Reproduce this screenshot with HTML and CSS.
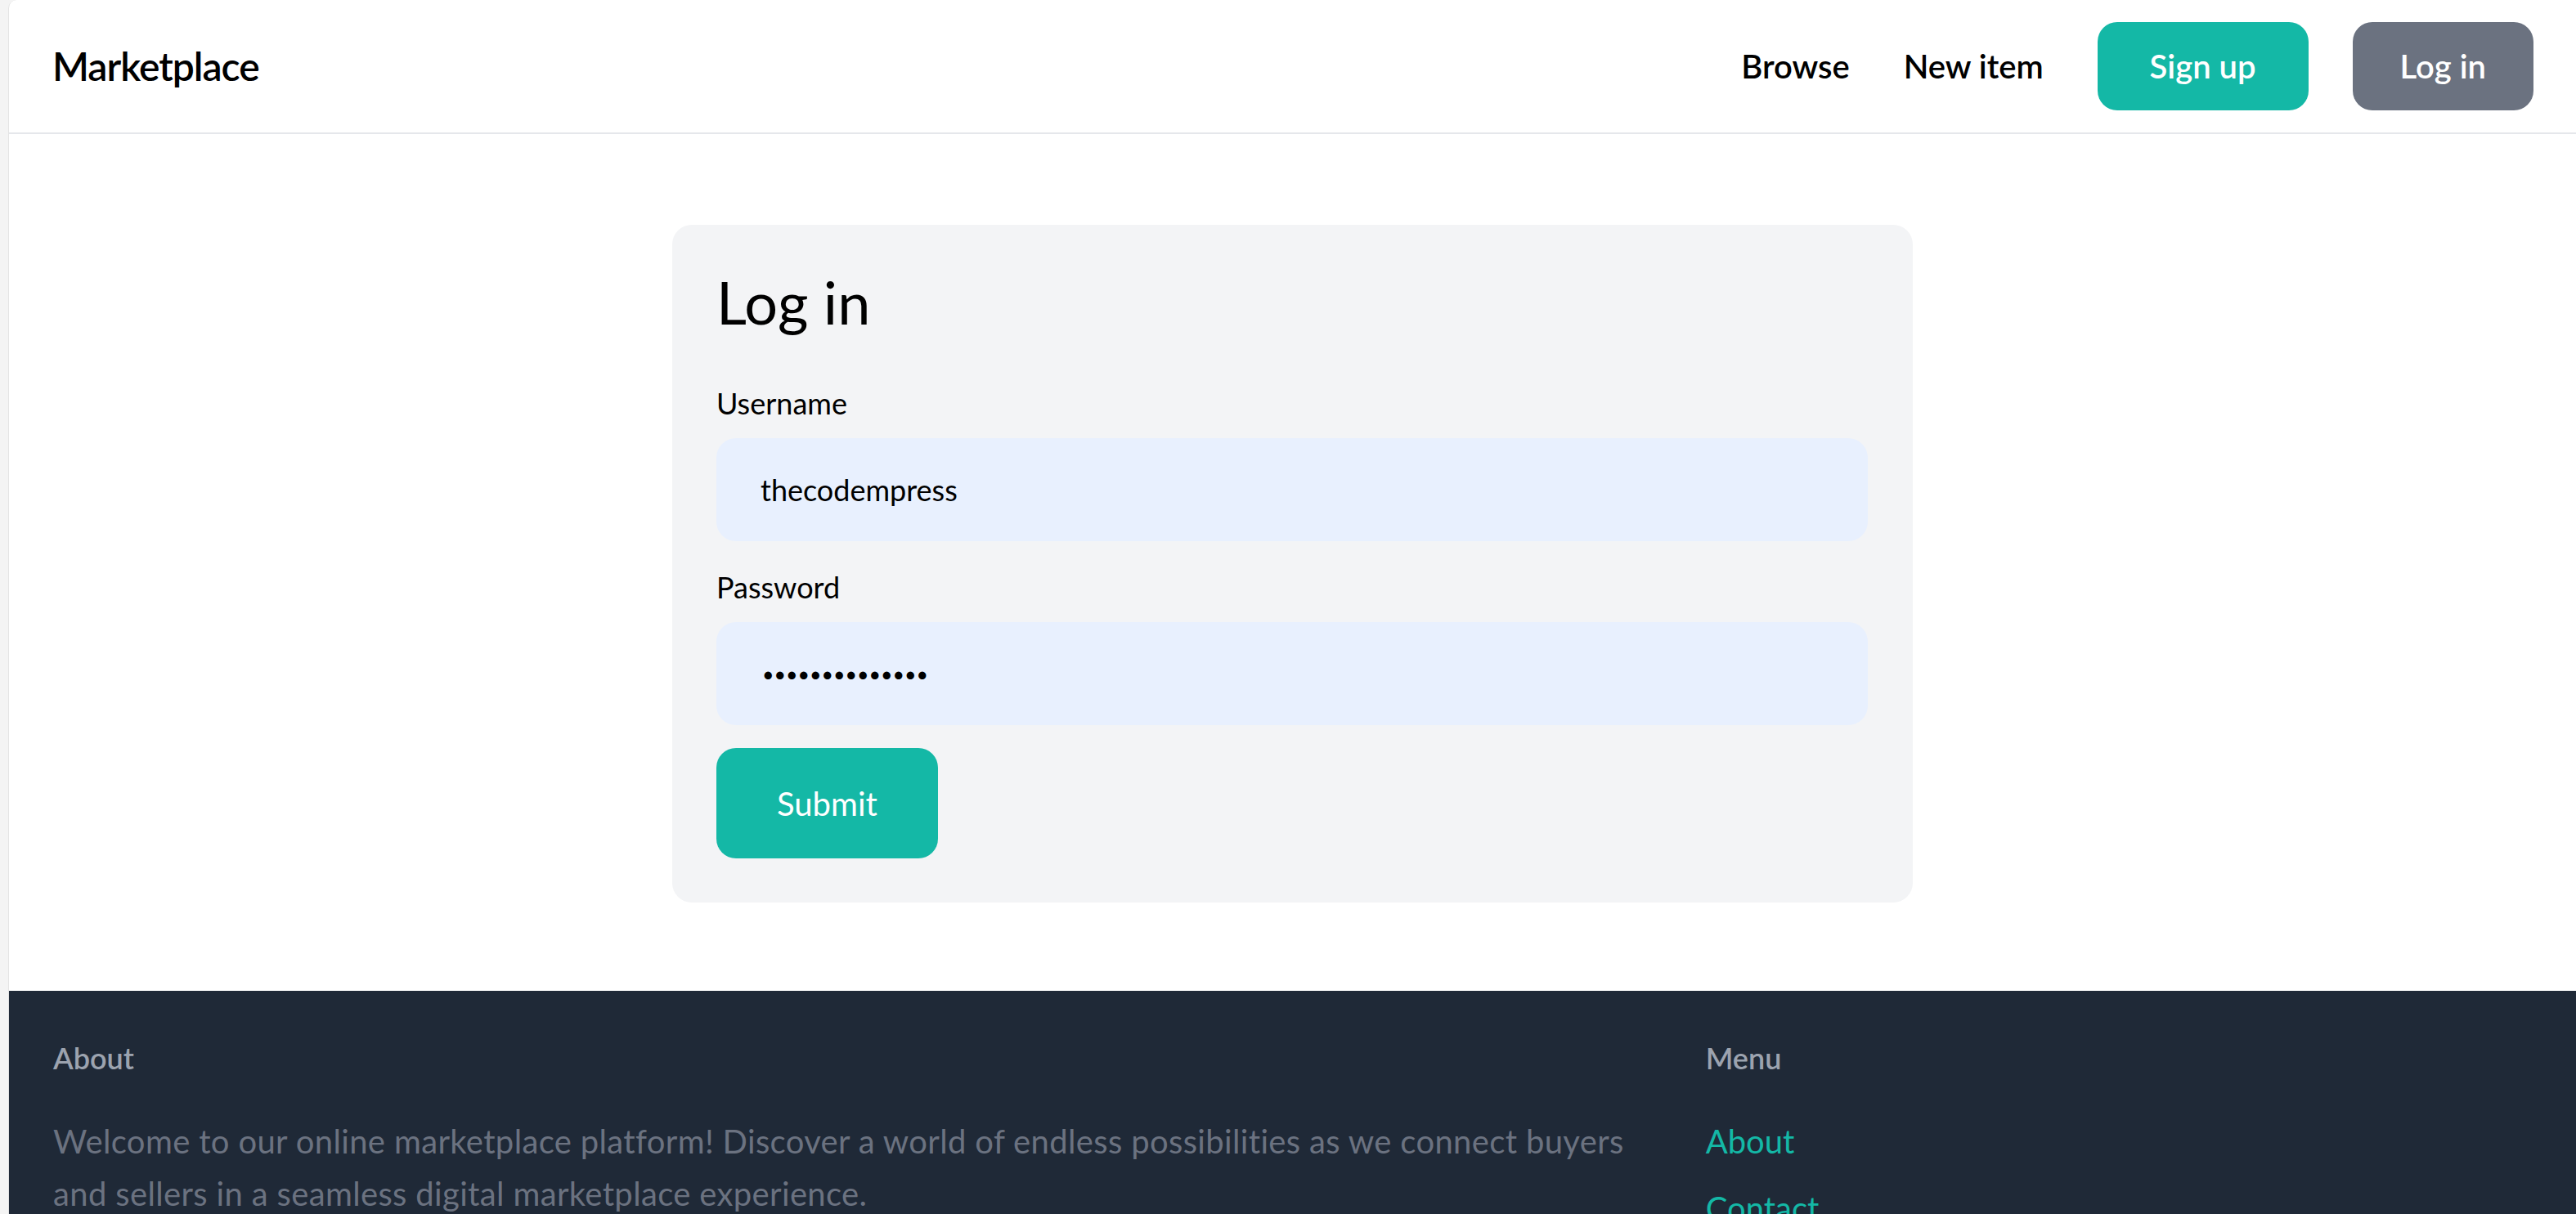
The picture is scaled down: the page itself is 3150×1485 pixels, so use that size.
FILE: index.html
```html
<!DOCTYPE html>
<html lang="en">
<head>
<meta charset="utf-8">
<title>Marketplace - Log in</title>
<link rel="stylesheet" href="styles.css">
</head>
<body>
<div class="page">
  <header class="topbar">
    <a class="brand" href="#">Marketplace</a>
    <nav class="nav">
      <a class="nav-link" href="#">Browse</a>
      <a class="nav-link" href="#">New item</a>
      <div class="nav-buttons">
        <a class="btn btn-teal" href="#">Sign up</a>
        <a class="btn btn-gray" href="#">Log in</a>
      </div>
    </nav>
  </header>

  <main class="main">
    <section class="card">
      <h1 class="card-title">Log in</h1>
      <form class="form">
        <div class="field">
          <label class="field-label" for="username">Username</label>
          <input class="field-input" id="username" type="text" value="thecodempress">
        </div>
        <div class="field">
          <label class="field-label" for="password">Password</label>
          <input class="field-input field-password" id="password" type="password" value="secretpassword">
        </div>
        <button class="submit" type="button">Submit</button>
      </form>
    </section>
  </main>

  <footer class="footer">
    <div class="footer-about">
      <h3 class="footer-heading">About</h3>
      <p class="footer-text">Welcome to our online marketplace platform! Discover a world of endless possibilities as we connect buyers and sellers in a seamless digital marketplace experience.</p>
    </div>
    <div class="footer-menu">
      <h3 class="footer-heading">Menu</h3>
      <ul class="footer-links">
        <li><a href="#">About</a></li>
        <li><a href="#">Contact</a></li>
        <li><a href="#">Privacy policy</a></li>
        <li><a href="#">Terms of use</a></li>
      </ul>
    </div>
  </footer>
</div>
</body>
</html>
```

FILE: styles.css
```css
* { box-sizing: border-box; }

html, body {
  margin: 0;
  padding: 0;
}

body {
  background: #f4f4f4;
  font-family: Lato, "Liberation Sans", sans-serif;
  color: #000;
}

a { text-decoration: none; color: inherit; }

.page {
  margin-left: 10px;
  background: #ffffff;
  border-left: 1px solid #e4e4e4;
  border-top-left-radius: 10px;
  min-height: 1485px;
  overflow: hidden;
}

/* Header */
.topbar {
  height: 164px;
  border-bottom: 2px solid #e5e7eb;
  display: flex;
  align-items: center;
  justify-content: space-between;
  padding: 0 52px 0 53px;
}

.brand {
  font-size: 48px;
  font-weight: 600;
  line-height: 64px;
  letter-spacing: -1px;
}

.nav {
  display: flex;
  align-items: center;
  gap: 66px;
}

.nav-link {
  font-size: 40px;
  font-weight: 600;
  line-height: 56px;
}

.nav-buttons {
  display: flex;
  gap: 54px;
}

.btn {
  display: flex;
  align-items: center;
  justify-content: center;
  height: 108px;
  padding: 0 64px;
  border-radius: 24px;
  color: #ffffff;
  font-size: 40px;
  font-weight: 600;
}

.btn-teal { background: #14b8a6; }
.btn-gray { background: #6b7280; padding: 0 58px; }

/* Main */
.main {
  padding: 111px 0 108px;
  display: flex;
  justify-content: center;
}

.card {
  width: 1517px;
  background: #f3f4f6;
  border-radius: 24px;
  padding: 54px 55px 54px 54px;
}

.card-title {
  margin: 0 0 56px;
  font-size: 72px;
  font-weight: 400;
  line-height: 80px;
}

.form {
  display: flex;
  flex-direction: column;
  align-items: flex-start;
}

.field {
  width: 100%;
  margin-bottom: 28px;
}

.field-label {
  display: block;
  font-size: 36px;
  line-height: 56px;
  margin-bottom: 15px;
}

.field-input {
  display: block;
  width: 100%;
  height: 126px;
  border: none;
  outline: none;
  border-radius: 24px;
  background: #e8f0fe;
  padding: 0 54px;
  font-family: Lato, "Liberation Sans", sans-serif;
  font-size: 36px;
  color: #000;
}

.field-password {
  font-size: 25px;
  padding-left: 56px;
}

.submit {
  height: 135px;
  padding: 0 74px;
  border: none;
  border-radius: 24px;
  background: #14b8a6;
  color: #ffffff;
  font-family: Lato, "Liberation Sans", sans-serif;
  font-size: 40px;
  font-weight: 400;
  cursor: pointer;
}

/* Footer */
.footer {
  background: #1f2937;
  display: grid;
  grid-template-columns: 2fr 1fr;
  padding: 54px 54px 48px;
  min-height: 400px;
}

.footer-heading {
  margin: 0 0 42px;
  font-size: 36px;
  line-height: 56px;
  font-weight: 600;
  color: #9ca3af;
}

.footer-text {
  margin: 0;
  font-size: 40px;
  line-height: 64px;
  letter-spacing: 0.35px;
  color: #6b7280;
  max-width: 1990px;
}

.footer-links {
  list-style: none;
  margin: 0;
  padding: 0;
}

.footer-links li {
  font-size: 40px;
  line-height: 64px;
  margin-bottom: 18px;
}

.footer-links a {
  color: #14b8a6;
}
```
